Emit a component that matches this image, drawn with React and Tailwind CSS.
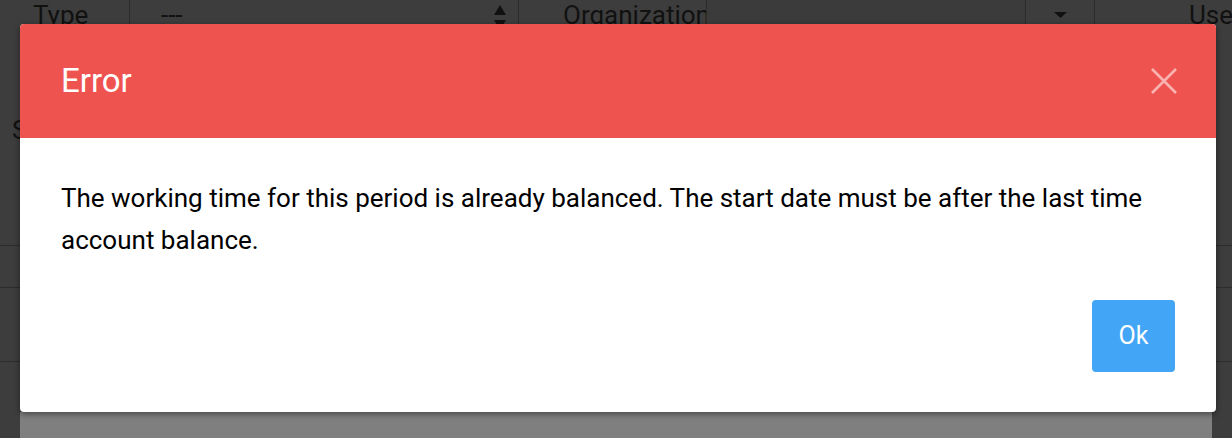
const FONT = { fontFamily: 'Roboto, "Liberation Sans", sans-serif' };

function CloseIcon() {
  return (
    <svg width="26" height="26" viewBox="0 0 26 26" fill="none" stroke="currentColor" strokeWidth="2.6">
      <path d="M1 1 L25 25 M25 1 L1 25" />
    </svg>
  );
}

function UpDown() {
  return (
    <svg width="12" height="26" viewBox="0 0 12 26" fill="currentColor">
      <path d="M6 0 L12 10 L0 10 Z M0 15 L12 15 L6 25 Z" />
    </svg>
  );
}

function Caret() {
  return (
    <svg width="13" height="6" viewBox="0 0 13 6" fill="currentColor">
      <path d="M0 0 L13 0 L6.5 6 Z" />
    </svg>
  );
}

function PageBehind() {
  return (
    <div className="flex flex-col text-[#111]">
      {/* filter bar + form, dimmed */}
      <div className="h-[246px] border-b border-[#2c2c2c]">
        <div className="flex h-[115px] text-[26px] leading-[30px]">
          <div className="w-[129px] shrink-0 pl-[33px]">Type</div>
          <div className="flex w-[389px] shrink-0 justify-between border-l border-[#2c2c2c] pl-[31px] pr-[12px]">
            <span>---</span>
            <span className="pt-[5px]">
              <UpDown />
            </span>
          </div>
          <div className="w-[188px] shrink-0 border-l border-[#2c2c2c] pl-[44px]">Organization</div>
          <div className="w-[319px] shrink-0 border-l border-[#2c2c2c] bg-[#3b3b3b]" />
          <div className="flex w-[69px] shrink-0 justify-center border-l border-[#2c2c2c] pt-[12px]">
            <Caret />
          </div>
          <div className="min-w-0 flex-1 overflow-hidden whitespace-nowrap border-l border-[#2c2c2c] pl-[94px]">User</div>
        </div>
        <div className="pl-[12px] text-[26px] leading-[30px]">Start</div>
      </div>
      <div className="h-[42px] border-b border-[#2c2c2c]" />
      <div className="h-[74px] border-b border-[#2c2c2c]" />
      <div className="h-[50px]" />
      <div className="mx-[20px] h-[40px] bg-[#7f7f7f]" />
    </div>
  );
}

export default function App() {
  return (
    <div className="relative h-[438px] w-[1232px] overflow-hidden bg-[#3d3d3d]" style={FONT}>
      <PageBehind />

      {/* Modal */}
      <div className="absolute left-[20px] top-[24px] w-[1196px] overflow-hidden rounded-[4px] bg-white shadow-[0_2px_6px_rgba(0,0,0,0.45)]">
        <div className="flex h-[114px] items-center justify-between bg-[#ef5350] pl-[41px] pr-[39px]">
          <h2 className="text-[33px] font-normal text-white">Error</h2>
          <button className="text-white/55">
            <CloseIcon />
          </button>
        </div>
        <div className="px-[41px] pb-[40px] pt-[39px]">
          <p className="text-[26px] leading-[42px] text-black">
            The working time for this period is already balanced. The start date must be after the last time account balance.
          </p>
          <div className="mt-[39px] flex justify-end">
            <button className="h-[72px] w-[83px] rounded-[4px] bg-[#42a5f5] text-[25px] text-white">Ok</button>
          </div>
        </div>
      </div>
    </div>
  );
}
